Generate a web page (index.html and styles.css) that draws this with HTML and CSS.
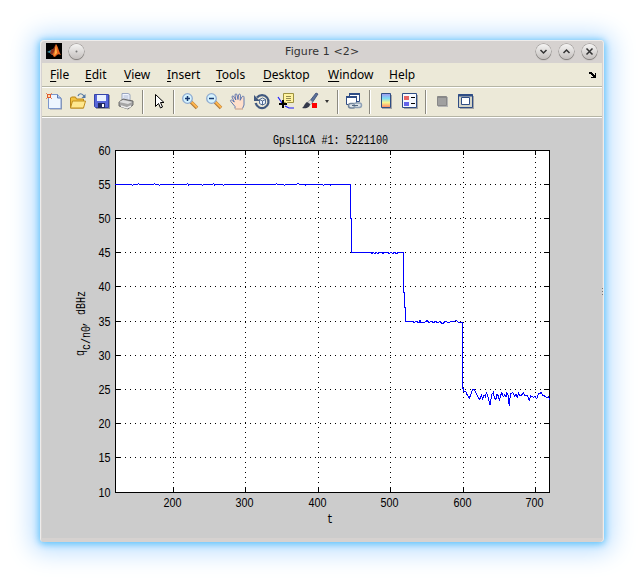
FILE: index.html
```
<!DOCTYPE html>
<html lang="en">

<head>
  <meta charset="UTF-8" />
  <title>Figure 1</title>
  <link rel="stylesheet" href="styles.css">
</head>

<body>
  <div class="window">
    <header class="titlebar">
      <svg class="logo" width="16" height="16" viewBox="0 0 16 16">
        <rect width="16" height="16" fill="#000" />
        <path d="M1 9l4-2 2-1 2 3-3 3-2-2z" fill="#3c91a5" />
        <path d="M5 7l2-1c1-1 2-4 3-5l-1 7-3 4-2-2z" fill="#8c2f1c" />
        <path d="M10 1c2 2 3 8 5 11-2-1-3-1-4 0s-2 2-3 2l-2-3c3-1 3-7 4-10z" fill="#e6641e" />
        <path d="M10 2l1 8-3 3c1-3 1-8 2-11z" fill="#ffb347" />
      </svg>
      <span class="round"><svg width="15" height="15"><circle cx="7.5" cy="7.5" r="1" fill="#777" /></svg></span>
      <h1>Figure 1 &lt;2&gt;</h1>
      <div class="controls">
        <span class="round"><svg width="15" height="15"><path d="M4.5 6l3 3 3-3" /></svg></span>
        <span class="round"><svg width="15" height="15"><path d="M4.5 9l3-3 3 3" /></svg></span>
        <span class="round"><svg width="15" height="15"><path d="M4.5 4.5l6 6M10.5 4.5l-6 6" /></svg></span>
      </div>
    </header>

    <nav class="menubar">
      <span><u>F</u>ile</span>
      <span><u>E</u>dit</span>
      <span><u>V</u>iew</span>
      <span><u>I</u>nsert</span>
      <span><u>T</u>ools</span>
      <span><u>D</u>esktop</span>
      <span><u>W</u>indow</span>
      <span><u>H</u>elp</span>
      <svg class="dock-arrow" width="7" height="6" shape-rendering="crispEdges">
        <path d="M0 0h3v1h1v1h1v1h1V1h1v5H2V5h2V4H3V3H2V2H0z" />
      </svg>
    </nav>

    <div class="toolbar">
      <!-- new -->
      <span class="tool"><svg viewBox="0 0 16 16">
        <path d="M4 3h9l3 3v10.500H4z" fill="#8d95a8" />
        <path d="M2.500 1.500h9l3.500 3.500v10.500h-12.500z" fill="#edf5ff" stroke="#7d97cc" />
        <path d="M11.500 1.500v3.500h3.500" fill="#b9cff0" stroke="#5878b4" />
        <path d="M0 0l6 6M6 0L0 6" stroke="#e88a60" />
        <rect x="1.500" y="1.500" width="3" height="3" fill="#ffd9b0" stroke="#e0592a" />
      </svg></span>
      <!-- open -->
      <span class="tool"><svg viewBox="0 0 16 16">
        <path d="M.5 15v-10l1-1h4l1 2h7v9z" fill="#f3c341" stroke="#b98417" />
        <path d="M.5 15l2-7h13l-2 7z" fill="#ffe88e" stroke="#c08d1c" />
        <path d="M8 3c1-3 4-3 6 0" fill="none" stroke="#5378a5" stroke-width="1.2" />
        <path d="M15.5 1v4h-4z" fill="#5378a5" />
      </svg></span>
      <!-- save -->
      <span class="tool"><svg viewBox="0 0 16 16">
        <path d="M2 2h14v14H2z" fill="#9a9a9a" />
        <path d="M.5 1.500h14v13h-13l-1-1z" fill="#5766d8" stroke="#3443a8" />
        <rect x="3" y="2" width="9" height="6" fill="#e9f1ff" />
        <rect x="4" y="10" width="7" height="5" fill="#20285f" />
        <rect x="8" y="11" width="2" height="3" fill="#fff" />
      </svg></span>
      <!-- print -->
      <span class="tool"><svg viewBox="0 0 16 16">
        <path d="M4 7l0-6.500h6l2 1 0 6z" fill="#f2f6ff" stroke="#8493b4" stroke-width=".8" />
        <path d="M5.500 3h5M5.500 5h5" stroke="#a9b6d0" />
        <path d="M1 9l4-3 10 2v4l-5 4-9-3z" fill="#a5a5a5" stroke="#606060" stroke-width=".9" />
        <path d="M1 9l4-2 9 2-4 2z" fill="#e0e0e0" />
        <path d="M3 13l6 2 4-2" fill="none" stroke="#eee" stroke-width="1.500" />
      </svg></span>
      <i class="sep"></i>
      <!-- pointer -->
      <span class="tool pointer"><svg viewBox="0 0 16 16">
        <path d="M5.500 1.500v12l3-3 2 4.500 2-1-2-4.500h3.500z" fill="#fff" stroke="#000" />
      </svg></span>
      <i class="sep"></i>
      <!-- zoom in -->
      <span class="tool"><svg viewBox="0 0 16 16">
        <path d="M9 9l6 6" stroke="#b07a3a" stroke-width="3.600" />
        <path d="M9.500 9l5.500 5.500" stroke="#ffb54d" stroke-width="2" />
        <circle cx="5.500" cy="5.500" r="4.800" fill="#d5f3ff" stroke="#8fabd0" stroke-width="1.300" />
        <path d="M3 5.500h5M5.500 3v5" stroke="#17386f" stroke-width="1.500" />
      </svg></span>
      <!-- zoom out -->
      <span class="tool"><svg viewBox="0 0 16 16">
        <path d="M9 9l6 6" stroke="#b07a3a" stroke-width="3.600" />
        <path d="M9.500 9l5.500 5.500" stroke="#ffb54d" stroke-width="2" />
        <circle cx="5.500" cy="5.500" r="4.800" fill="#d5f3ff" stroke="#8fabd0" stroke-width="1.300" />
        <path d="M3 5.500h5" stroke="#17386f" stroke-width="1.500" />
      </svg></span>
      <!-- pan -->
      <span class="tool"><svg viewBox="0 0 16 16">
        <path d="M5 15.500v-2L.8 8.500c-1-1.200.5-2 1.500-1l2 1.500-2.300-5c0-1.500 1.500-1.500 2 0l1.800 3-.8-5c0-1.500 2-1.500 2 0l1 4.500.5-4.500c.5-1.500 2-1 2 .3l-.3 5 1.800-3.500c1-1.300 2.200-.5 2 .7L14 12l-1.500 3.500" fill="#ffdfca" stroke="#4f6dab" stroke-width=".9" />
        <path d="M5 16h8" stroke="#c89a80" />
      </svg></span>
      <!-- rotate -->
      <span class="tool"><svg viewBox="0 0 16 16">
        <path d="M3 4.500a6.500 6.500 0 1 1-1.300 5.500" fill="none" stroke="#41597f" stroke-width="2.200" />
        <path d="M0 2v6h6z" fill="#41597f" />
        <path d="M5.500 6.500l3-1.500 3 1.500v4l-3 1.500-3-1.500zM5.500 6.500l3 1.500 3-1.500M8.500 8v4" fill="#edf4ff" stroke="#435f8a" stroke-width=".9" />
      </svg></span>
      <!-- data cursor -->
      <span class="tool"><svg viewBox="0 0 16 16">
        <path d="M0 4l4 6M7 13l4 2h5" fill="none" stroke="#1a1aff" stroke-width="1.200" />
        <path d="M5.500.5h10v9h-6l-2 2v-2h-2z" fill="#fff3a0" stroke="#9c9140" />
        <path d="M8 3.500h5M8 5.500h5M8 7.500h5" stroke="#91894f" />
        <path d="M1 11h8M5 7v8" stroke="#000" stroke-width="2" />
      </svg></span>
      <!-- brush -->
      <span class="tool"><svg viewBox="0 0 16 16">
        <path d="M7 9l7-9 2 1-6 9z" fill="#5c7199" stroke="#34466e" stroke-width=".8" />
        <path d="M5.500 9l3-2 2 2-2 3z" fill="#ddd" stroke="#888" stroke-width=".5" />
        <path d="M0 15c2-1 2-4 5-6l3 2c0 3-3 5-8 4z" fill="#34394a" />
        <rect x="10" y="10" width="5" height="5" fill="#f00" />
      </svg></span>
      <span class="drop"></span>
      <i class="sep"></i>
      <!-- link plot -->
      <span class="tool link"><svg viewBox="0 0 16 16">
        <path d="M3.500.5h10v8h-10z" fill="#fff" stroke="#2f4d85" />
        <path d="M3 1h11" stroke="#2f4d85" stroke-width="2" />
        <path d="M.5 3.500h10v8H.5z" fill="#fff" stroke="#2f4d85" />
        <path d="M0 4h11" stroke="#2f4d85" stroke-width="2" />
        <rect x="2.500" y="10.500" width="7" height="4.500" rx="2.200" fill="#dde4ea" stroke="#71849a" stroke-width="1.500" />
        <rect x="8" y="10" width="7.500" height="4.500" rx="2.200" fill="#dde4ea" stroke="#8fa1b5" stroke-width="1.500" />
        <path d="M6 12.500h6" stroke="#52677f" />
      </svg></span>
      <i class="sep"></i>
      <!-- colorbar -->
      <span class="tool"><svg viewBox="0 0 16 16">
        <defs>
          <linearGradient id="bar" x2="0" y2="1">
            <stop offset="0" stop-color="#a394f0" />
            <stop offset=".35" stop-color="#7ddcf5" />
            <stop offset=".65" stop-color="#f6f58e" />
            <stop offset="1" stop-color="#ff8060" />
          </linearGradient>
        </defs>
        <path d="M4 2h10v14H4z" fill="#a5a5a5" />
        <path d="M3.500.5h9v14h-9z" fill="url(#bar)" stroke="#2f4d85" />
      </svg></span>
      <!-- legend -->
      <span class="tool"><svg viewBox="0 0 16 16">
        <path d="M2 2h14v14H2z" fill="#a5a5a5" />
        <path d="M.5.5h14v14H.5z" fill="#f5f8ff" stroke="#2f4d85" />
        <rect x="2" y="3" width="5" height="4" fill="#e86464" />
        <rect x="2" y="9" width="5" height="4" fill="#6464ea" />
        <path d="M9 4.500h4M9 10.500h4" stroke="#000" />
      </svg></span>
      <i class="sep short"></i>
      <!-- hide tools -->
      <span class="tool"><svg viewBox="0 0 16 16">
        <path d="M4 4h10v10H4z" fill="#b5b5b5" />
        <path d="M3.500 3.500h9v9h-9z" fill="#a0a0a0" stroke="#888" />
        <path d="M3 4.500h10" stroke="#888" />
      </svg></span>
      <!-- show tools -->
      <span class="tool"><svg viewBox="0 0 16 16">
        <path d="M2 3h14v13H2z" fill="#a5a5a5" />
        <path d="M.5 1.500h14v13H.5z" fill="#d5d5c8" stroke="#2f4d85" />
        <path d="M0 2.500h15" stroke="#2f4d85" stroke-width="2" />
        <path d="M3.500 4.500h8v7h-8z" fill="#fff" stroke="#2f4d85" />
      </svg></span>
    </div>

    <main class="figure">
      <svg class="plot" width="562" height="420" viewBox="42 118 562 420">
        <rect x="115" y="150" width="435" height="343" fill="#fff" />
        <g class="lines">
          <path class="grid" d="M115 184.500H549M115 218.500H549M115 252.500H549M115 286.500H549M115 321.500H549M115 355.500H549M115 389.500H549M115 423.500H549M115 457.500H549" />
          <path class="grid" d="M173.500 493V150M245.500 493V150M318.500 493V150M390.500 493V150M463.500 493V150M535.500 493V150" />
          <path class="axis" d="M115.500 150.500H549.500V492.500H115.500z" />
          <path class="axis" d="M115 184.500h6M115 218.500h6M115 252.500h6M115 286.500h6M115 321.500h6M115 355.500h6M115 389.500h6M115 423.500h6M115 457.500h6" />
          <path class="axis" d="M550 184.500h-6M550 218.500h-6M550 252.500h-6M550 286.500h-6M550 321.500h-6M550 355.500h-6M550 389.500h-6M550 423.500h-6M550 457.500h-6" />
          <path class="axis" d="M173.500 150v5M245.500 150v5M318.500 150v5M390.500 150v5M463.500 150v5M535.500 150v5" />
          <path class="axis" d="M173.500 493v-6M245.500 493v-6M318.500 493v-6M390.500 493v-6M463.500 493v-6M535.500 493v-6" />
          <!-- the signal, with its one pixel jumps left out of the flat run -->
          <path class="data" d="M115 184.500H132M133 184.500H138M139 184.500H154M155 184.500H159M160 184.500H187M188 184.500H202M203 184.500H213M214 184.500H223M224 184.500H276M277 184.500H284M285 184.500H297M299 184.500H323M324 184.500H350.500V218.500H351.500V252.500H371l1 1 1-1 2 1 1-1 2 1 1-1H382l1 1 1-1h4l1 1 2-1 2 1 1-1 3 1 1-1H403.500V292H404.500V307H405.500V321.500H413l1 1 2-1 3 1 1-2 1 2h3l2-1 1-1 2 2 2-1 3 1 1-1 3 1 2-1 2 2h1l2-2 4 1 2-1h3l2-1 3 2H462.500V389" />
          <path class="data" d="M132 185.500h1M138 183.500h1M154 183.500h1M159 185.500h1M187 183.500h1M188 185.500h1M202 185.500h1M213 183.500h1M214 185.500h1M223 185.500h1M276 183.500h1M284 185.500h1M297 183.500h2M305 185.500h1M323 185.500h1M330 185.500h1" />
          <g transform="translate(440 360) scale(.33333)">
            <path class="data" d="M70 84V96H78L82 106 88 115 92 104 98 89H104L108 100 114 112 120 118 124 106 128 116 132 104 136 110 139 98 143 108 146 116 149 133H152L154 105 160 97 163 113 168 118 171 103 176 108 178 124 182 105 186 98 190 110 194 105 198 112 200 96 204 106 208 138 211 102 218 97 224 108 228 103 232 112 236 99 240 108 246 104 250 97 255 108 262 107 268 121 272 108 280 112 286 110 290 116 295 102 304 98 308 108 314 108 320 113 326 110 328 120" />
          </g>
        </g>
        <g class="labels">
          <text class="mono" x="273" y="144" textLength="115" lengthAdjust="spacingAndGlyphs">GpsL1CA #1: 5221100</text>
          <text x="98.500" y="155" textLength="12" lengthAdjust="spacingAndGlyphs">60</text>
          <text x="98.500" y="189" textLength="12" lengthAdjust="spacingAndGlyphs">55</text>
          <text x="98.500" y="223" textLength="12" lengthAdjust="spacingAndGlyphs">50</text>
          <text x="98.500" y="257" textLength="12" lengthAdjust="spacingAndGlyphs">45</text>
          <text x="98.500" y="291" textLength="12" lengthAdjust="spacingAndGlyphs">40</text>
          <text x="98.500" y="326" textLength="12" lengthAdjust="spacingAndGlyphs">35</text>
          <text x="98.500" y="360" textLength="12" lengthAdjust="spacingAndGlyphs">30</text>
          <text x="98.500" y="394" textLength="12" lengthAdjust="spacingAndGlyphs">25</text>
          <text x="98.500" y="428" textLength="12" lengthAdjust="spacingAndGlyphs">20</text>
          <text x="98.500" y="462" textLength="12" lengthAdjust="spacingAndGlyphs">15</text>
          <text x="98.500" y="497" textLength="12" lengthAdjust="spacingAndGlyphs">10</text>
          <text x="163.500" y="507" textLength="18" lengthAdjust="spacingAndGlyphs">200</text>
          <text x="235.500" y="507" textLength="18" lengthAdjust="spacingAndGlyphs">300</text>
          <text x="308.500" y="507" textLength="18" lengthAdjust="spacingAndGlyphs">400</text>
          <text x="380.500" y="507" textLength="18" lengthAdjust="spacingAndGlyphs">500</text>
          <text x="453.500" y="507" textLength="18" lengthAdjust="spacingAndGlyphs">600</text>
          <text x="525.500" y="507" textLength="18" lengthAdjust="spacingAndGlyphs">700</text>
          <text class="mono" x="327" y="523" textLength="6" lengthAdjust="spacingAndGlyphs">t</text>
          <g transform="translate(85 356) rotate(-90)">
            <text class="mono" x="0" y="-1" textLength="6" lengthAdjust="spacingAndGlyphs">q</text>
            <text class="mono" x="6" y="5" textLength="24" lengthAdjust="spacingAndGlyphs">c/n0</text>
            <text class="mono" x="29" y="0" textLength="6" lengthAdjust="spacingAndGlyphs">,</text>
            <text class="mono" x="41" y="0" textLength="24" lengthAdjust="spacingAndGlyphs">dBHz</text>
          </g>
        </g>
        <!-- splitter grip -->
        <path d="M602 288h1v1h-1zM602 291h1v1h-1zM602 294h1v1h-1z" fill="#777" />
      </svg>
    </main>
  </div>
</body>

</html>
```
FILE: styles.css
```
* {
  box-sizing: border-box;
}

body {
  margin: 0;
  padding: 40px;
  background: #fff;
  color: #000;
  font-family: "Noto Sans", sans-serif;
}

.window {
  width: 564px;
  height: 502px;
  padding: 0 2px 4px;
  background: #d6d2d0;
  border-radius: 4px;
  box-shadow: inset 1px 1px 0 #eeeceb, inset -1px 0 0 #eeeceb, 0 1px 7px 1px #5fc3fa, 0 2px 24px 8px #bcdeff;
}

.titlebar {
  display: flex;
  align-items: center;
  height: 23px;
  padding: 0 5px 1px 4px;
}

.logo {
  margin-right: 7px;
}

.titlebar h1 {
  flex: 1;
  margin: 0 0 0 150px;
  padding-left: 51px;
  font: 11px "DejaVu Sans", sans-serif;
  letter-spacing: 0.1px;
  color: #333;
}

.round {
  display: block;
  width: 15px;
  height: 15px;
  border-radius: 50%;
  background: linear-gradient(#f5f4f3, #c4c0be);
  box-shadow: 0 0 0 0.5px #8c8886, 0 1px 1px #77736f;
}

.round svg {
  display: block;
}

.round path {
  fill: none;
  stroke: #333;
  stroke-width: 1.5;
}

.controls {
  display: flex;
  gap: 8px;
}

.menubar {
  display: grid;
  grid-template-columns: 35px 39px 43px 49px 47px 65px 61px 1fr auto;
  align-items: center;
  height: 25px;
  padding: 0 6px 1px 8px;
  background: #ece9d8;
  border-bottom: 1px solid #fff;
  box-shadow: inset 0 -1px 0 #b5b5a5;
  font-size: 12px;
  line-height: 16px;
}

.menubar u {
  text-underline-offset: 2px;
  text-decoration-thickness: 1px;
  text-decoration-skip-ink: none;
}

.toolbar {
  display: flex;
  align-items: center;
  height: 30px;
  padding-bottom: 2px;
  background: #ece9d8;
  border-bottom: 1px solid #fff;
  box-shadow: inset 0 -1px 0 #b5b5a5;
}

.tool {
  display: flex;
  justify-content: center;
  width: 24px;
  margin-bottom: 2px;
}

.tool svg {
  flex: none;
  width: 16px;
  height: 16px;
  overflow: visible;
}

.pointer {
  width: 22px;
}

.link {
  width: 23px;
}

.sep {
  width: 2px;
  height: 24px;
  margin: 0 3px 0 4px;
  background: #8c8a80;
  border-right: 1px solid #fff;
}

.sep.short {
  margin-left: 3px;
}

.drop {
  width: 11px;
  padding-left: 3px;
}

.drop::before {
  content: "";
  display: block;
  width: 0;
  border: solid transparent;
  border-width: 3px 2.5px 0;
  border-top-color: #333;
}

.figure {
  height: 420px;
  background: #ccc;
}

.plot {
  display: block;
}

.lines path {
  fill: none;
  stroke: #000;
  stroke-width: 1;
  shape-rendering: crispEdges;
  vector-effect: non-scaling-stroke;
}

.lines .grid {
  stroke-dasharray: 1 4;
}

.lines .data {
  stroke: #00f;
}

.labels {
  font: 12px "Liberation Sans", sans-serif;
}

.labels .mono {
  font: 12px "Liberation Mono", monospace;
}
```
